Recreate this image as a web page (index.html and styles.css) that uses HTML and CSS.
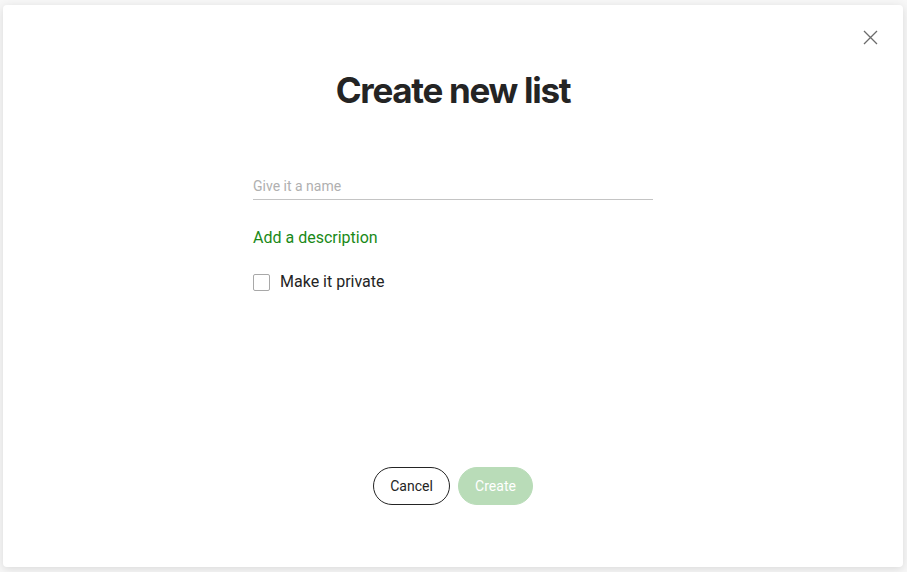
FILE: index.html
```html
<!DOCTYPE html>
<html>
<head>
<meta charset="utf-8">
<link rel="stylesheet" href="styles.css">
</head>
<body>
<div class="page">
  <div class="modal">
    <button class="close" aria-label="Close">
      <svg width="17" height="17" viewBox="0 0 17 17"><path d="M2 2 L15 15 M15 2 L2 15" stroke="#6b6b6b" stroke-width="1.3" fill="none"/></svg>
    </button>
    <h1 class="title">Create new list</h1>
    <div class="form">
      <div class="field">
        <input class="name" type="text" placeholder="Give it a name">
      </div>
      <a class="desc" href="#">Add a description</a>
      <label class="private">
        <span class="box"></span>
        <span class="label-text">Make it private</span>
      </label>
    </div>
    <div class="actions">
      <button class="btn cancel">Cancel</button>
      <button class="btn create">Create</button>
    </div>
  </div>
</div>
</body>
</html>
```
FILE: styles.css
```css
html, body {
  margin: 0;
  padding: 0;
  background: #f7f7f7;
  font-family: Roboto, "Noto Sans", sans-serif;
}
.page {
  padding: 5px 4px 5px 3px;
  height: 572px;
  box-sizing: border-box;
}
.modal {
  position: relative;
  background: #fff;
  width: 900px;
  height: 562px;
  border-radius: 4px;
  box-shadow: 0 2px 10px rgba(0,0,0,0.12);
  box-sizing: border-box;
  display: flex;
  flex-direction: column;
  align-items: center;
  padding-top: 63px;
}
.close {
  position: absolute;
  top: 24px;
  right: 24px;
  background: none;
  border: 0;
  padding: 0;
  width: 17px;
  height: 17px;
  cursor: pointer;
}
.close svg { display: block; }
.title {
  margin: 0;
  font-family: Inter, sans-serif;
  font-size: 35px;
  line-height: 44px;
  font-weight: 700;
  letter-spacing: -1.3px;
  color: #242424;
}
.form {
  width: 400px;
  margin-top: 64px;
  display: flex;
  flex-direction: column;
}
.field {
  border-bottom: 1px solid #c4c4c4;
}
.name {
  border: 0;
  outline: none;
  padding: 0 0 3px 0;
  width: 100%;
  font-family: Roboto, sans-serif;
  font-size: 14px;
  line-height: 20px;
  color: #242424;
  background: transparent;
}
.name::placeholder {
  color: #b0b0b0;
}
.desc {
  margin-top: 28px;
  color: #1a8917;
  text-decoration: none;
  font-size: 16px;
  line-height: 20px;
  align-self: flex-start;
}
.private {
  margin-top: 24px;
  display: flex;
  align-items: center;
  gap: 10px;
  font-size: 16px;
  line-height: 20px;
  color: #242424;
}
.box {
  width: 15px;
  height: 15px;
  border: 1px solid #a8a8a8;
  border-radius: 2px;
  background: #fff;
}
.actions {
  margin-top: auto;
  margin-bottom: 62px;
  display: flex;
  gap: 8px;
}
.btn {
  font-family: Roboto, sans-serif;
  font-size: 14px;
  height: 38px;
  border-radius: 99px;
  padding: 0 16px;
  box-sizing: border-box;
}
.cancel {
  background: #fff;
  border: 1px solid #242424;
  color: #242424;
  width: 77px;
}
.create {
  background: #b9dcb8;
  border: 1px solid #b9dcb8;
  color: #fff;
  width: 75px;
}
```
